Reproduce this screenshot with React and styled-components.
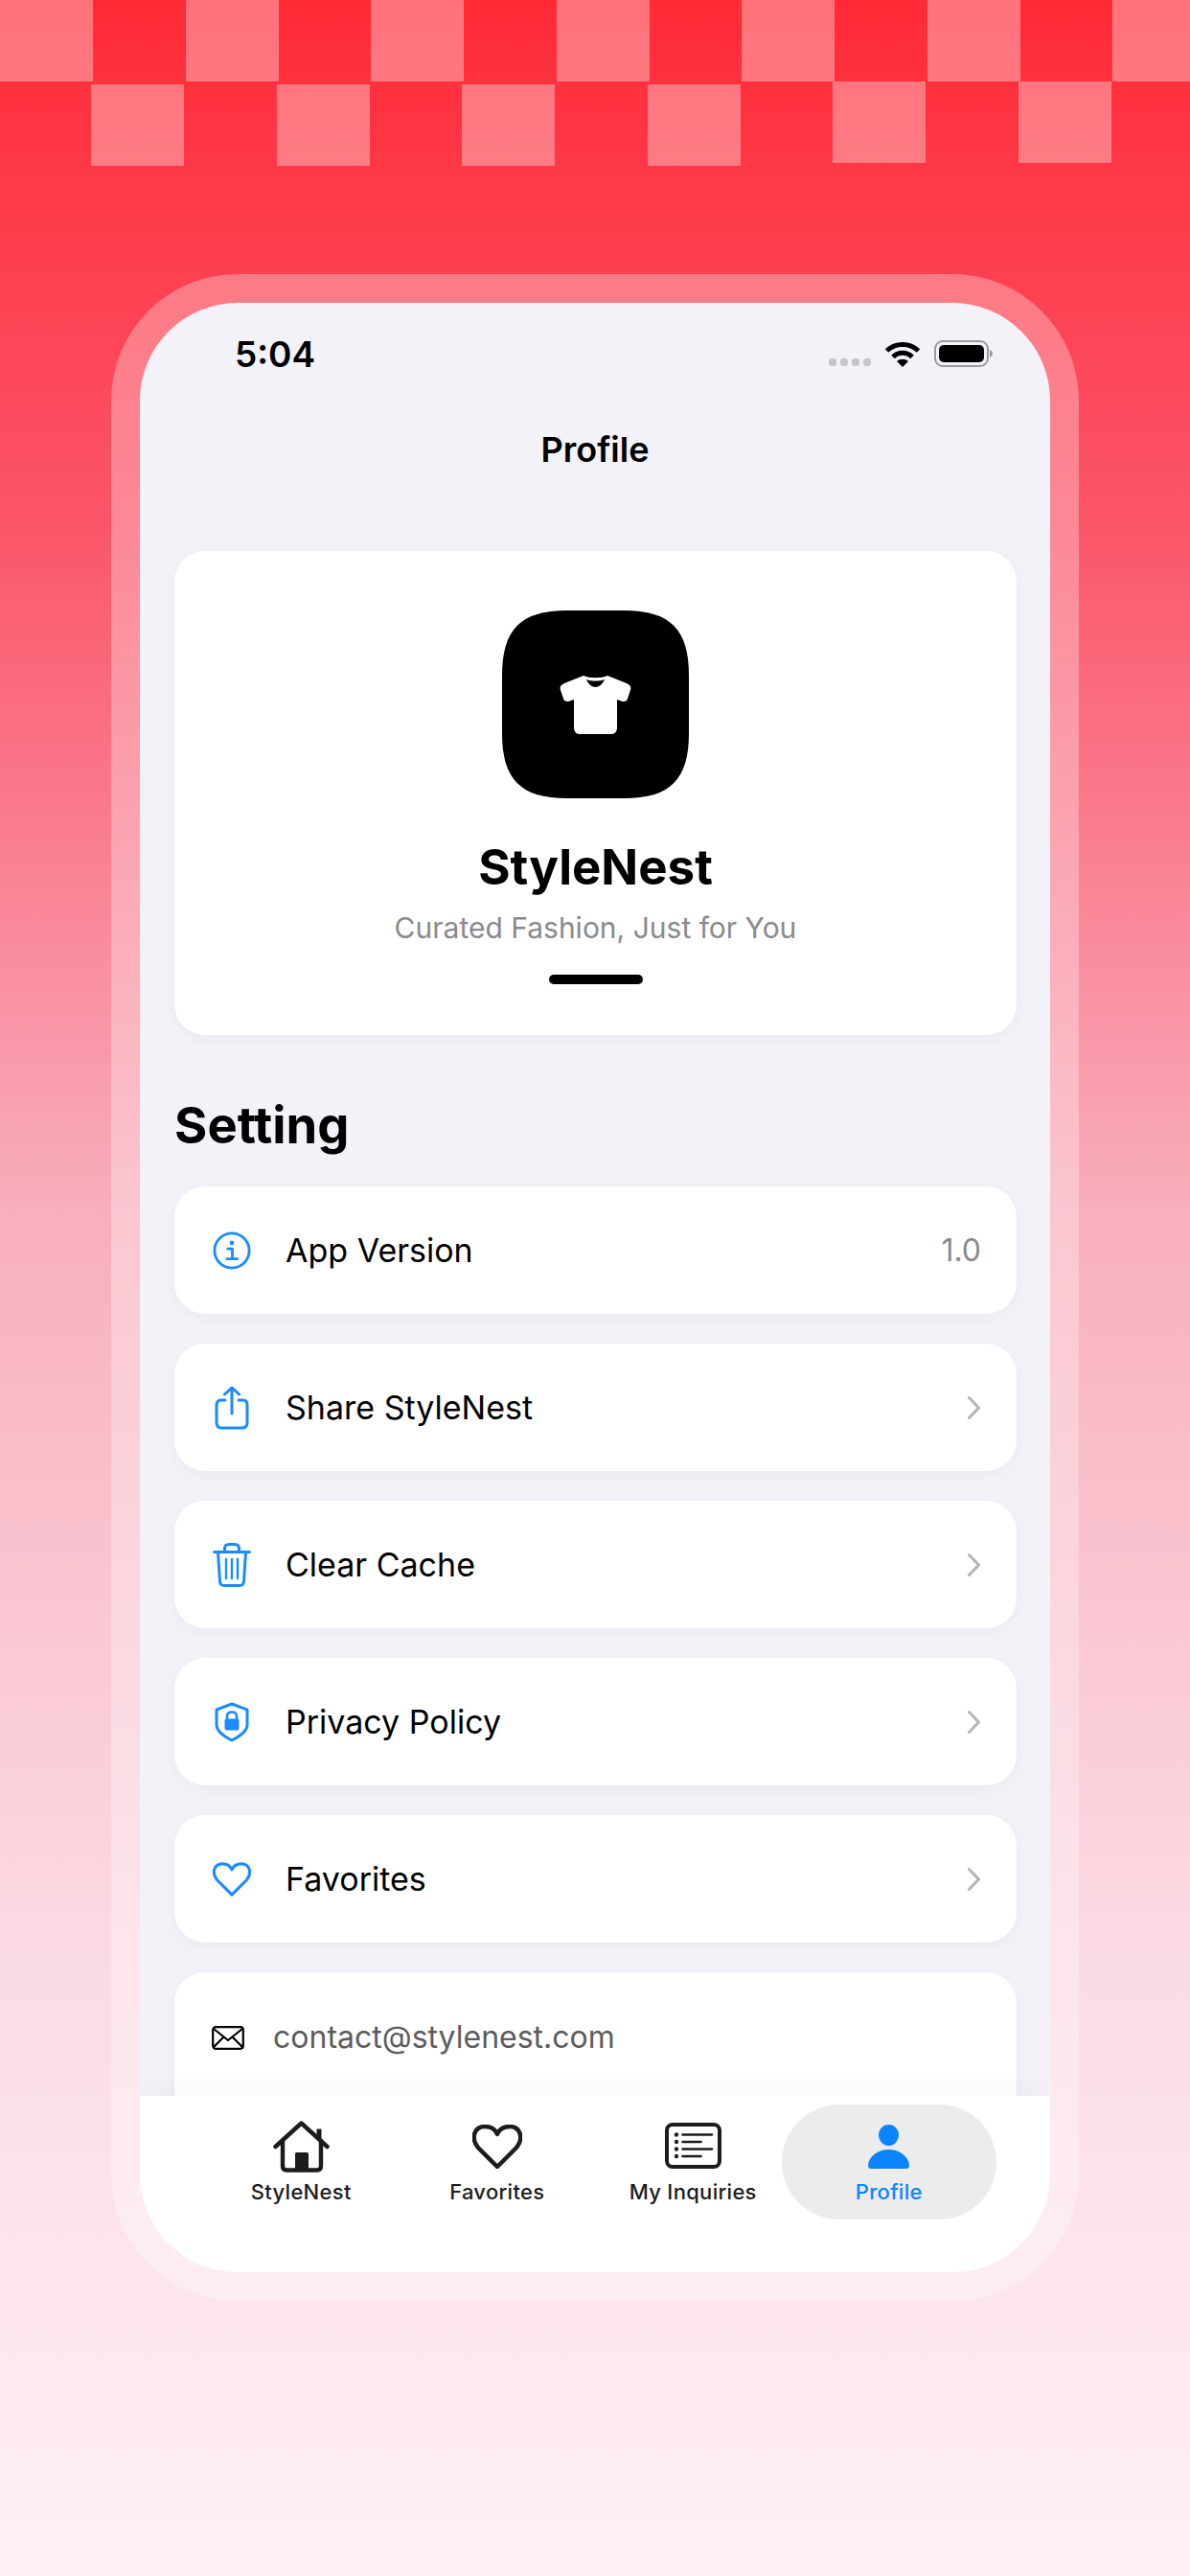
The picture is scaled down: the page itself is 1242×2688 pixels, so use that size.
import React from "react";
import styled, { createGlobalStyle } from "styled-components";

const GlobalStyle = createGlobalStyle`
  html, body {
    margin: 0;
    padding: 0;
  }
  * {
    box-sizing: border-box;
  }
  body {
    font-family: Inter, "Liberation Sans", sans-serif;
  }
`;

const Page = styled.div`
  width: 1242px;
  height: 2688px;
  overflow: hidden;
  background: linear-gradient(180deg, #ff2a36 0%, #fb5468 20%, #f8aebd 47%, #fbdbe3 76%, #fef0f3 100%);
`;

const Checker = styled.div`
  height: 286px;
  display: flex;
  flex-direction: column;
`;

const CheckerRow = styled.div`
  display: flex;
  gap: 96.5px;
  padding-left: ${(props) => props.offset}px;
`;

const CheckerCell = styled.div`
  width: 97px;
  height: 85px;
  flex-shrink: 0;
  margin-top: ${(props) => props.drop || 0}px;
  background: rgba(255, 255, 255, 0.34);
`;

const PhoneFrame = styled.div`
  width: 1010px;
  height: 2115px;
  margin: 0 auto;
  padding: 30px;
  border-radius: 132px;
  background: rgba(255, 255, 255, 0.3);
`;

const Screen = styled.div`
  height: 100%;
  display: flex;
  flex-direction: column;
  overflow: hidden;
  border-radius: 102px;
  background: #f2f2f8;
`;

const StatusBar = styled.div`
  height: 106px;
  flex-shrink: 0;
  display: flex;
  align-items: center;
  justify-content: space-between;
  padding: 0 60px 0 99px;
`;

const Time = styled.span`
  font-size: 37px;
  font-weight: 600;
  color: #000;
`;

const StatusIcons = styled.div`
  display: flex;
  align-items: center;
  gap: 14px;
`;

const SignalDots = styled.div`
  display: flex;
  gap: 4px;
  margin-top: 18px;
`;

const SignalDot = styled.span`
  width: 8px;
  height: 8px;
  border-radius: 3px;
  background: #c6c6ca;
`;

const NavTitle = styled.div`
  height: 94px;
  flex-shrink: 0;
  display: flex;
  align-items: center;
  justify-content: center;
  font-size: 36px;
  font-weight: 600;
  color: #000;
`;

const Content = styled.div`
  flex: 1;
  min-height: 0;
  overflow: hidden;
  padding: 59px 35px 0 36px;
`;

const HeroCard = styled.div`
  height: 505px;
  display: flex;
  flex-direction: column;
  align-items: center;
  padding-top: 62px;
  border-radius: 32px;
  background: #fff;
  box-shadow: 0 4px 18px rgba(30, 30, 80, 0.04);
`;

const AppName = styled.div`
  margin-top: 42px;
  font-size: 51px;
  line-height: 60px;
  font-weight: 700;
  color: #000;
`;

const Tagline = styled.div`
  margin-top: 15px;
  font-size: 30px;
  line-height: 36px;
  color: #8a8a8e;
`;

const HeroBar = styled.div`
  width: 98px;
  height: 10px;
  margin-top: 31px;
  border-radius: 5px;
  background: #000;
`;

const SectionTitle = styled.h2`
  margin: 0;
  height: 158px;
  padding-top: 62px;
  font-size: 52.5px;
  line-height: 64px;
  font-weight: 700;
  color: #000;
`;

const RowList = styled.div`
  display: flex;
  flex-direction: column;
  gap: 31px;
`;

const Row = styled.div`
  height: 133px;
  display: flex;
  align-items: center;
  padding: 0 37px 0 40px;
  border-radius: 32px;
  background: #fff;
  box-shadow: 0 4px 18px rgba(30, 30, 80, 0.04);
`;

const RowIcon = styled.div`
  width: 40px;
  display: flex;
  justify-content: center;
  flex-shrink: 0;
`;

const RowLabel = styled.span`
  flex: 1;
  margin-left: 36px;
  font-size: 34px;
  color: #000;
`;

const RowValue = styled.span`
  font-size: 32px;
  color: #8a8a8e;
`;

const ContactCard = styled.div`
  height: 260px;
  padding: 50px 39px;
  border-radius: 32px;
  background: #fff;
  box-shadow: 0 4px 18px rgba(30, 30, 80, 0.04);
`;

const ContactLine = styled.div`
  height: 36px;
  display: flex;
  align-items: center;
  gap: 30px;
`;

const ContactText = styled.span`
  font-size: 32px;
  line-height: 36px;
  color: #5c5c60;
`;

const TabBar = styled.div`
  position: relative;
  height: 184px;
  flex-shrink: 0;
  display: grid;
  grid-template-columns: repeat(4, 204.5px);
  align-items: start;
  padding: 9px 0 0 66px;
  background: #fff;
  box-shadow: 0 -8px 26px rgba(0, 0, 0, 0.03);
`;

const Tab = styled.div`
  height: 120px;
  margin: ${(props) => (props.active ? "0 -10px" : "0")};
  display: flex;
  flex-direction: column;
  align-items: center;
  justify-content: flex-end;
  padding-bottom: 15px;
  border-radius: 60px;
  background: ${(props) => (props.active ? "#ececec" : "transparent")};
`;

const TabGraphic = styled.div`
  height: 54px;
  display: flex;
  align-items: flex-end;
  padding-bottom: ${(props) => props.lift || 0}px;
`;

const TabLabel = styled.span`
  margin-top: 6px;
  font-size: 22px;
  line-height: 28px;
  font-weight: 500;
  letter-spacing: 0.3px;
  color: ${(props) => (props.active ? "#0a84ff" : "#1c1c1e")};
`;

const BLUE = "#1a8cff";

const WifiIcon = () => (
  <svg width="38" height="28" viewBox="0 0 38 28" fill="none" stroke="#000" strokeWidth="5">
    <path d="M2.5 11 A 24 24 0 0 1 35.5 11" />
    <path d="M9 17.5 A 14 14 0 0 1 29 17.5" />
    <path d="M19 28 L13 22 A 9 9 0 0 1 25 22 Z" fill="#000" stroke="none" />
  </svg>
);

const BatteryIcon = () => (
  <svg width="61" height="28" viewBox="0 0 61 28">
    <rect x="1" y="1" width="55" height="26" rx="8" fill="none" stroke="#9a9a9e" strokeWidth="2" />
    <rect x="5" y="5" width="47" height="18" rx="5" fill="#000" />
    <path d="M58 10 C60 11 61 12.5 61 14 C61 15.5 60 17 58 18 Z" fill="#9a9a9e" />
  </svg>
);

const AppLogo = () => (
  <svg width="195" height="196" viewBox="0 0 195 196">
    <path d="M68 0 H127 C176 0 195 20 195 68 V128 C195 176 176 196 127 196 H68 C19 196 0 176 0 128 V68 C0 20 19 0 68 0 Z" fill="#000" />
    <g transform="translate(60 67)">
      <path
        fill="#fff"
        d="M25 1 C31 4 44 4 50 1 L70 9 C74 11 75 13 74 16 L71 25 C70 28 68 28 66 28 L60 26 L60 55 C60 59 58 62 54 62 L21 62 C17 62 15 59 15 55 L15 26 L9 28 C7 28 5 28 4 25 L1 16 C0 13 1 11 5 9 Z"
      />
      <path fill="#000" d="M28 5 C34 7 41 7 47 5 C45 10 41 13 37.5 13 C34 13 30 10 28 5 Z" />
    </g>
  </svg>
);

const InfoIcon = () => (
  <svg width="42" height="42" viewBox="0 0 42 42" fill="none" stroke={BLUE} strokeWidth="3">
    <circle cx="21" cy="21" r="19" />
    <circle cx="21" cy="12.5" r="2.4" fill={BLUE} stroke="none" />
    <path d="M16.5 19H21.5V30M15.5 30H27" strokeLinecap="round" strokeLinejoin="round" />
  </svg>
);

const ShareIcon = () => (
  <svg width="36" height="46" viewBox="0 0 36 46" fill="none" stroke={BLUE} strokeWidth="3" strokeLinecap="round" strokeLinejoin="round">
    <path d="M11 15H7 C3.5 15 2 17 2 20 V38 C2 42 3.5 44 7 44 H29 C32.5 44 34 42 34 38 V20 C34 17 32.5 15 29 15 H25" />
    <path d="M18 29 V2 M10.5 9 L18 2 L25.5 9" />
  </svg>
);

const TrashIcon = () => (
  <svg width="40" height="46" viewBox="0 0 40 46" fill="none" stroke={BLUE} strokeWidth="3" strokeLinecap="round" strokeLinejoin="round">
    <path d="M1.5 9.5H38.5" />
    <path d="M12.5 9 V6 C12.5 3 14 1.5 17 1.5 H23 C26 1.5 27.5 3 27.5 6 V9" />
    <path d="M5.5 10 L7.5 40 C7.7 43 9 44.5 12 44.5 H28 C31 44.5 32.3 43 32.5 40 L34.5 10" />
    <path d="M14 17V37M20 17V37M26 17V37" strokeWidth="2.4" />
  </svg>
);

const ShieldIcon = () => (
  <svg width="36" height="42" viewBox="0 0 36 42" fill="none">
    <path
      d="M18 2 L34 8 V24 C34 31 26 36 18 40 C10 36 2 31 2 24 V8 Z"
      stroke={BLUE}
      strokeWidth="3"
      strokeLinejoin="round"
    />
    <path d="M13 18 V15 C13 12 15 10.5 18 10.5 C21 10.5 23 12 23 15 V18" stroke={BLUE} strokeWidth="2.6" />
    <rect x="10.5" y="17.5" width="15" height="12" rx="2" fill={BLUE} />
  </svg>
);

const HeartOutline = ({ color, width, height, stroke }) => (
  <svg width={width} height={height} viewBox="0 0 52 46" fill="none" stroke={color} strokeWidth={stroke} strokeLinejoin="round">
    <path d="M26 44 L6 24 C-2 14 2 2 13 2 C19 2 24 5 26 10 C28 5 33 2 39 2 C50 2 54 14 46 24 Z" />
  </svg>
);

const Chevron = () => (
  <svg width="15" height="26" viewBox="0 0 15 26" fill="none" stroke="#b4b4b9" strokeWidth="3" strokeLinecap="round" strokeLinejoin="round">
    <path d="M2.5 2.5 L12.5 13 L2.5 23.5" />
  </svg>
);

const MailIcon = () => (
  <svg width="34" height="25" viewBox="0 0 34 25" fill="none" stroke="#000" strokeWidth="2.2" strokeLinejoin="round">
    <rect x="1.2" y="1.2" width="31.6" height="22.6" rx="3" />
    <path d="M2 3 L17 15 L32 3 M2 22 L12.5 11.5 M32 22 L21.5 11.5" />
  </svg>
);

const HouseIcon = () => (
  <svg width="59" height="54" viewBox="0 0 59 54" fill="none" stroke="#1c1c1e" strokeWidth="4.4" strokeLinecap="round" strokeLinejoin="round">
    <path d="M2.5 27 L29.5 2.5 L56.5 27" />
    <path d="M10 21 V47 C10 50 11 51.5 14 51.5 H46 C49 51.5 50 50 50 47 V21" />
    <path d="M48 8.5 V20" strokeWidth="5" strokeLinecap="butt" />
    <rect x="23" y="33" width="14" height="19" rx="1.5" fill="#1c1c1e" stroke="none" />
  </svg>
);

const ListIcon = () => (
  <svg width="59" height="48" viewBox="0 0 59 48" fill="none" stroke="#1c1c1e">
    <rect x="2" y="2" width="55" height="44" rx="6" strokeWidth="4" />
    <path d="M18.5 12.5H49M18.5 20H37.5M18.5 27.5H49M18.5 35H37.5" strokeWidth="2.6" strokeLinecap="round" />
    <g fill="#1c1c1e" stroke="none">
      <circle cx="12" cy="12.5" r="2.2" />
      <circle cx="12" cy="20" r="2.2" />
      <circle cx="12" cy="27.5" r="2.2" />
      <circle cx="12" cy="35" r="2.2" />
    </g>
  </svg>
);

const PersonIcon = () => (
  <svg width="43" height="46" viewBox="0 0 43 46" fill="#0a84ff">
    <ellipse cx="21.5" cy="11" rx="10.5" ry="11" />
    <path d="M3 46 C0.5 46 0 44 0 42 C1 33 10 26 21.5 26 C33 26 42 33 43 42 C43 44 42.5 46 40 46 Z" />
  </svg>
);

const topCells = [0, 1, 2, 3, 4, 5, 6];
const bottomCells = [3, 3, 3, 3, 0, 0];

const settings = [
  { label: "App Version", icon: <InfoIcon />, value: "1.0" },
  { label: "Share StyleNest", icon: <ShareIcon /> },
  { label: "Clear Cache", icon: <TrashIcon /> },
  { label: "Privacy Policy", icon: <ShieldIcon /> },
  { label: "Favorites", icon: <HeartOutline color={BLUE} width={40} height={36} stroke={4} /> },
];

const tabs = [
  { label: "StyleNest", icon: <HouseIcon />, lift: 0 },
  { label: "Favorites", icon: <HeartOutline color="#1c1c1e" width={52} height={46} stroke={4.5} />, lift: 4 },
  { label: "My Inquiries", icon: <ListIcon />, lift: 4 },
  { label: "Profile", icon: <PersonIcon />, lift: 4, active: true },
];

export default function App() {
  return (
    <Page>
      <GlobalStyle />
      <Checker>
        <CheckerRow offset={0}>
          {topCells.map((cell) => (
            <CheckerCell key={cell} />
          ))}
        </CheckerRow>
        <CheckerRow offset={95}>
          {bottomCells.map((drop, i) => (
            <CheckerCell key={i} drop={drop} />
          ))}
        </CheckerRow>
      </Checker>
      <PhoneFrame>
        <Screen>
          <StatusBar>
            <Time>5:04</Time>
            <StatusIcons>
              <SignalDots>
                <SignalDot />
                <SignalDot />
                <SignalDot />
                <SignalDot />
              </SignalDots>
              <WifiIcon />
              <BatteryIcon />
            </StatusIcons>
          </StatusBar>
          <NavTitle>Profile</NavTitle>
          <Content>
            <HeroCard>
              <AppLogo />
              <AppName>StyleNest</AppName>
              <Tagline>Curated Fashion, Just for You</Tagline>
              <HeroBar />
            </HeroCard>
            <SectionTitle>Setting</SectionTitle>
            <RowList>
              {settings.map((item) => (
                <Row key={item.label}>
                  <RowIcon>{item.icon}</RowIcon>
                  <RowLabel>{item.label}</RowLabel>
                  {item.value ? <RowValue>{item.value}</RowValue> : <Chevron />}
                </Row>
              ))}
              <ContactCard>
                <ContactLine>
                  <MailIcon />
                  <ContactText>contact@stylenest.com</ContactText>
                </ContactLine>
              </ContactCard>
            </RowList>
          </Content>
          <TabBar>
            {tabs.map((tab) => (
              <Tab key={tab.label} active={tab.active}>
                <TabGraphic lift={tab.lift}>{tab.icon}</TabGraphic>
                <TabLabel active={tab.active}>{tab.label}</TabLabel>
              </Tab>
            ))}
          </TabBar>
        </Screen>
      </PhoneFrame>
    </Page>
  );
}
